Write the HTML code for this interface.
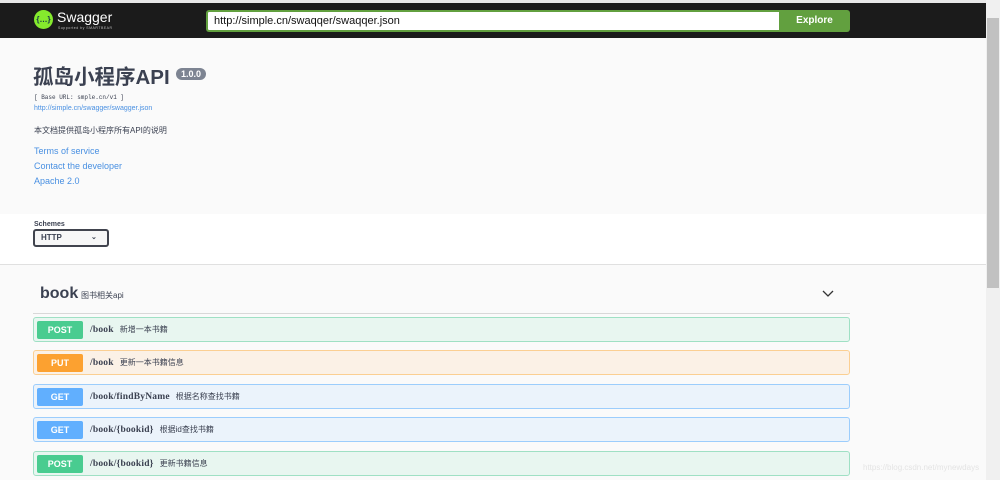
<!DOCTYPE html>
<html><head><meta charset="utf-8"><style>
*{margin:0;padding:0;box-sizing:border-box}
body{width:1000px;height:480px;overflow:hidden;background:#fafafa;font-family:"Liberation Sans","Noto Sans CJK SC",sans-serif;position:relative;color:#3b4151}
.abs{position:absolute}
.top{left:0;top:0;width:986px;height:3px;background:#e8e8e8}
.bar{left:0;top:3px;width:986px;height:35px;background:#1b1b1b}
.sb{left:986px;top:0;width:14px;height:480px;background:#f0f0f0}
.thumb{left:987px;top:18px;width:12px;height:270px;background:#c1c1c1}
.op{left:33px;width:817px;height:25px;border-radius:3px;border:1px solid}
.badge{position:absolute;left:3px;top:3px;width:46px;height:18px;border-radius:2px;color:#fff;font-weight:bold;font-size:9px;text-align:center;line-height:18px}
.path{position:absolute;left:56px;top:0;line-height:23px;font-family:"Liberation Serif",serif;font-weight:bold;font-size:9.5px;color:#3b4151;letter-spacing:.2px}
.path span{font-family:"Liberation Sans","Noto Sans CJK SC",sans-serif;font-weight:normal;font-size:8px;margin-left:6px;letter-spacing:0}
.post{background:#e8f6f0;border-color:#9fe0c4}.post .badge{background:#49cc90}
.put{background:#fbf1e6;border-color:#fbcf92}.put .badge{background:#fca130}
.get{background:#ebf3fb;border-color:#9ccdfc}.get .badge{background:#61affe}
a{color:#4990e2;text-decoration:none}
</style></head><body>
<div class="abs top"></div>
<div class="abs bar"></div>
<div class="abs" style="left:34px;top:10px;width:19px;height:19px;border-radius:50%;background:#85ea2d;color:#173647;font-size:8px;font-weight:bold;text-align:center;line-height:19px">{…}</div>
<div class="abs" style="left:57px;top:9px;color:#fff;font-size:14px">Swagger</div>
<div class="abs" style="left:58px;top:26px;color:#bbb;font-size:3.5px;letter-spacing:.5px">Supported by SMARTBEAR</div>
<div class="abs" style="left:206px;top:10px;width:574px;height:22px;background:#fff;border:2px solid #62a03f;border-right:none;border-radius:3px 0 0 3px;font-size:11px;line-height:18px;padding-left:6px;color:#111">http://simple.cn/swaqqer/swaqqer.json</div>
<div class="abs" style="left:779px;top:10px;width:71px;height:22px;background:#62a03f;border-radius:0 3px 3px 0;color:#fff;font-weight:bold;font-size:10px;text-align:center;line-height:22px">Explore</div>
<div class="sb abs"></div><div class="thumb abs"></div>
<div class="abs" style="left:33px;top:65px;font-size:20.5px;line-height:26px;font-weight:bold;color:#3b4151">孤岛小程序API</div>
<div class="abs" style="left:176px;top:68px;background:#7d8492;color:#fff;font-size:9px;font-weight:bold;border-radius:7px;padding:1px 5px">1.0.0</div>
<div class="abs" style="left:34px;top:94px;font-family:'Liberation Mono',monospace;font-size:6px;color:#3b4151">[ Base URL: smple.cn/v1 ]</div>
<div class="abs" style="left:34px;top:105px;font-size:7px"><a>http://simple.cn/swagger/swagger.json</a></div>
<div class="abs" style="left:34px;top:125px;font-size:8px">本文档提供孤岛小程序所有API的说明</div>
<div class="abs" style="left:34px;top:144px;font-size:9px;line-height:15px"><a>Terms of service</a><br><a>Contact the developer</a><br><a>Apache 2.0</a></div>
<div class="abs" style="left:0;top:214px;width:986px;height:51px;background:#fff;border-bottom:1px solid #e0e0e0"></div>
<div class="abs" style="left:34px;top:221px;font-size:7px;font-weight:bold">Schemes</div>
<div class="abs" style="left:33px;top:229px;width:76px;height:18px;border:2px solid #41444e;border-radius:3px;background:#f7f7f7;font-size:8px;font-weight:bold;line-height:14px;padding-left:6px">HTTP<span style="position:absolute;left:56px;font-size:7px">⌄</span></div>
<div class="abs" style="left:40px;top:285px;font-size:16px;font-weight:bold">book</div>
<div class="abs" style="left:81px;top:290px;font-size:8px">图书相关api</div>
<svg class="abs" style="left:822px;top:290px" width="12" height="8"><path d="M1 1 L6 6 L11 1" fill="none" stroke="#333" stroke-width="1.3"/></svg>
<div class="abs" style="left:33px;top:313px;width:817px;height:1px;background:#d8d8d8"></div>
<div class="abs op post" style="top:317px"><div class="badge">POST</div><div class="path">/book<span>新增一本书籍</span></div></div>
<div class="abs op put" style="top:350px"><div class="badge">PUT</div><div class="path">/book<span>更新一本书籍信息</span></div></div>
<div class="abs op get" style="top:384px"><div class="badge">GET</div><div class="path">/book/findByName<span>根据名称查找书籍</span></div></div>
<div class="abs op get" style="top:417px"><div class="badge">GET</div><div class="path">/book/{bookid}<span>根据id查找书籍</span></div></div>
<div class="abs op post" style="top:451px"><div class="badge">POST</div><div class="path">/book/{bookid}<span>更新书籍信息</span></div></div>
<div class="abs" style="left:863px;top:463px;font-size:8px;color:#e4e4e4">https://blog.csdn.net/mynewdays</div>
</body></html>
